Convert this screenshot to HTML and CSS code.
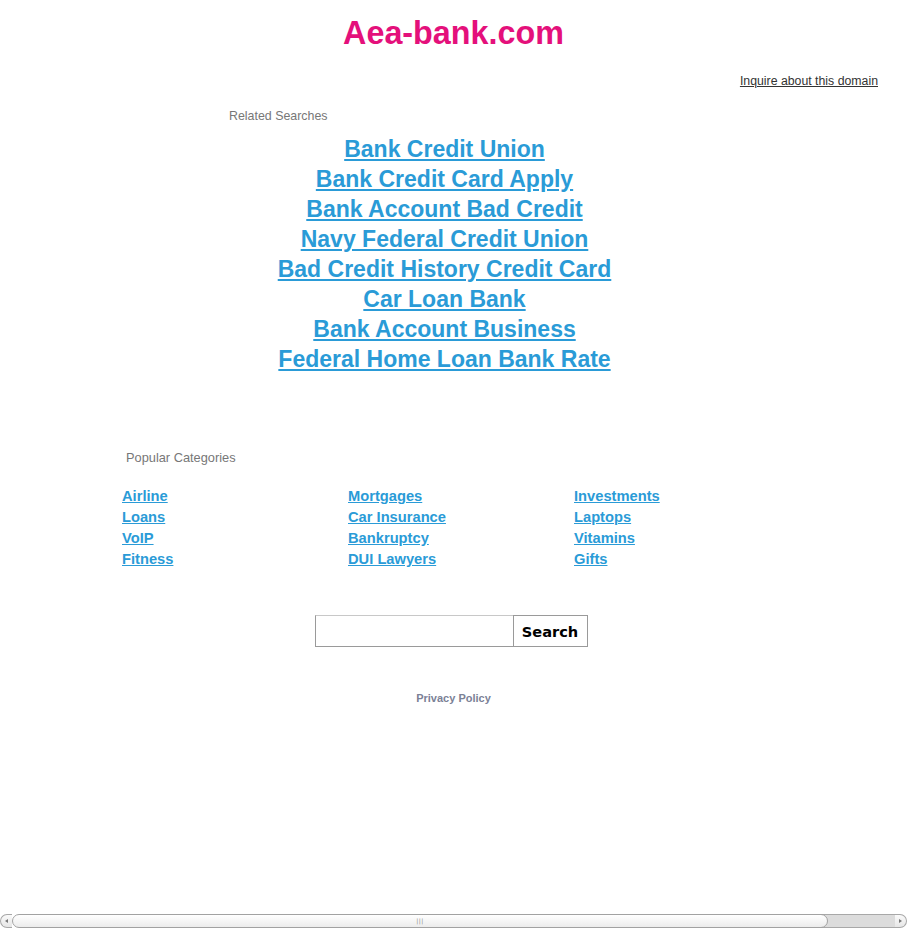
FILE: index.html
```html
<!DOCTYPE html>
<html>
<head>
<meta charset="utf-8">
<title>Aea-bank.com</title>
<link rel="stylesheet" href="styles.css">
</head>
<body>
<header class="header">
  <h1 class="title">Aea-bank.com</h1>
</header>
<div class="inquire-row">
  <a class="inquire" href="#">Inquire about this domain</a>
</div>
<section class="related">
  <div class="section-label">Related Searches</div>
  <ul class="related-list">
    <li><a href="#">Bank Credit Union</a></li>
    <li><a href="#">Bank Credit Card Apply</a></li>
    <li><a href="#">Bank Account Bad Credit</a></li>
    <li><a href="#">Navy Federal Credit Union</a></li>
    <li><a href="#">Bad Credit History Credit Card</a></li>
    <li><a href="#">Car Loan Bank</a></li>
    <li><a href="#">Bank Account Business</a></li>
    <li><a href="#">Federal Home Loan Bank Rate</a></li>
  </ul>
</section>
<section class="categories">
  <div class="cat-label">Popular Categories</div>
  <div class="cat-grid">
    <ul class="cat-col">
      <li><a href="#">Airline</a></li>
      <li><a href="#">Loans</a></li>
      <li><a href="#">VoIP</a></li>
      <li><a href="#">Fitness</a></li>
    </ul>
    <ul class="cat-col">
      <li><a href="#">Mortgages</a></li>
      <li><a href="#">Car Insurance</a></li>
      <li><a href="#">Bankruptcy</a></li>
      <li><a href="#">DUI Lawyers</a></li>
    </ul>
    <ul class="cat-col">
      <li><a href="#">Investments</a></li>
      <li><a href="#">Laptops</a></li>
      <li><a href="#">Vitamins</a></li>
      <li><a href="#">Gifts</a></li>
    </ul>
  </div>
</section>
<form class="search" onsubmit="return false">
  <input class="search-input" type="text">
  <button class="search-btn" type="submit">Search</button>
</form>
<footer class="footer">
  <a class="privacy" href="#">Privacy Policy</a>
</footer>
<div class="hscroll">
  <div class="hs-btn hs-left"><span class="tri-left"></span></div>
  <div class="hs-thumb"><span class="grip">|||</span></div>
  <div class="hs-track"></div>
  <div class="hs-btn hs-right"><span class="tri-right"></span></div>
</div>
</body>
</html>
```

FILE: styles.css
```css
html, body {
  margin: 0;
  padding: 0;
  background: #fff;
  font-family: "Liberation Sans", Arial, sans-serif;
}

.header {
  padding-top: 15px;
  text-align: center;
}

.title {
  margin: 0;
  font-size: 32.3px;
  line-height: 37px;
  font-weight: bold;
  color: #e4107b;
}

.inquire-row {
  display: flex;
  justify-content: flex-end;
  padding-right: 29px;
  margin-top: 22px;
}

.inquire {
  font-size: 12.3px;
  line-height: 14px;
  color: #333;
  text-decoration: underline;
}

.related {
  margin-left: 229px;
  width: 431px;
  margin-top: 21px;
}

.section-label {
  font-size: 12.4px;
  line-height: 15px;
  color: #777;
}

.related-list {
  list-style: none;
  margin: 10px 0 0 0;
  padding: 0;
  text-align: center;
}

.related-list li {
  font-size: 23px;
  line-height: 30px;
  font-weight: bold;
}

.related-list a {
  color: #2a9bd7;
  text-decoration: underline;
}

.categories {
  margin-left: 122px;
  margin-top: 76px;
}

.cat-label {
  padding-left: 4px;
  font-size: 12.8px;
  line-height: 16px;
  color: #777;
}

.cat-grid {
  display: grid;
  grid-template-columns: 226px 226px 226px;
  margin-top: 20px;
}

.cat-col {
  list-style: none;
  margin: 0;
  padding: 0;
}

.cat-col li {
  font-size: 14.7px;
  line-height: 21px;
  font-weight: bold;
}

.cat-col a {
  color: #2a9bd7;
  text-decoration: underline;
}

.search {
  display: flex;
  justify-content: center;
  margin-top: 45px;
  padding-right: 5px;
}

.search-input {
  box-sizing: border-box;
  width: 198px;
  height: 32px;
  margin: 0;
  border: 1px solid #9a9a9a;
  border-top-color: #c8c8c8;
  border-right: none;
  padding: 0 4px;
  background: #fff;
}

.search-btn {
  box-sizing: border-box;
  width: 75px;
  height: 32px;
  margin: 0;
  border: 1px solid #9a9a9a;
  background: #fff;
  font-family: "DejaVu Sans", sans-serif;
  font-weight: bold;
  font-size: 14.6px;
  color: #000;
  padding: 0;
}

.footer {
  text-align: center;
  margin-top: 41px;
}

.privacy {
  font-size: 11px;
  line-height: 14px;
  font-weight: bold;
  color: #7b8196;
  text-decoration: none;
}

/* fake browser horizontal scrollbar */
.hscroll {
  position: fixed;
  left: 0;
  right: 0;
  bottom: 0;
  height: 14px;
  display: flex;
  background: #fff;
}

.hs-btn {
  position: relative;
  width: 12px;
  height: 14px;
  box-sizing: border-box;
  border: 1px solid #a8a8a8;
  background: linear-gradient(#fafafa, #e6e6e6);
}

.hs-left {
  border-radius: 7px 0 0 7px;
  border-right: none;
}

.hs-right {
  border-radius: 0 7px 7px 0;
  border-left: none;
}

.tri-left, .tri-right {
  position: absolute;
  top: 4px;
  width: 0;
  height: 0;
  border-top: 2.5px solid transparent;
  border-bottom: 2.5px solid transparent;
}

.tri-left {
  left: 4px;
  border-right: 3px solid #777;
}

.tri-right {
  left: 4px;
  border-left: 3px solid #777;
}

.hs-thumb {
  width: 816px;
  height: 14px;
  box-sizing: border-box;
  border: 1px solid #a2a2a2;
  border-radius: 7px;
  background: linear-gradient(#ffffff, #ececec);
  display: flex;
  justify-content: center;
  align-items: center;
  flex: none;
}

.grip {
  font-size: 6px;
  line-height: 6px;
  color: #888;
  letter-spacing: 0.5px;
  font-family: "DejaVu Sans", sans-serif;
}

.hs-track {
  flex: 1;
  height: 14px;
  box-sizing: border-box;
  border-top: 1px solid #a8a8a8;
  border-bottom: 1px solid #a8a8a8;
  background: #dcdcdc;
  margin-left: -7px;
  position: relative;
  z-index: -1;
}
```
